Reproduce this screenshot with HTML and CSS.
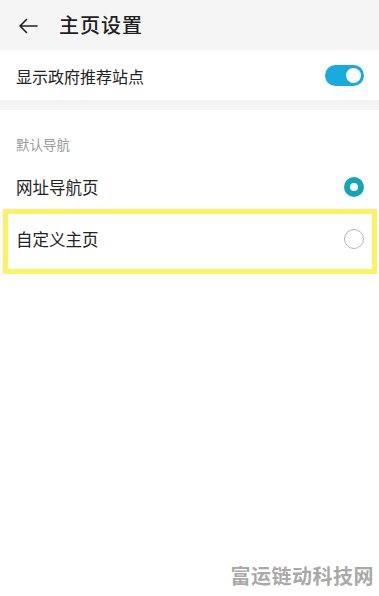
FILE: index.html
```html
<!DOCTYPE html>
<html lang="zh">
<head>
<meta charset="utf-8">
<link rel="stylesheet" href="styles.css">
</head>
<body>
<div class="page">
  <header class="topbar">
    <svg class="back" width="20" height="16" viewBox="0 0 20 16">
      <path d="M19 8H2M8.5 1.5L2 8l6.5 6.5" fill="none" stroke="#222" stroke-width="1.6" stroke-linecap="round" stroke-linejoin="round"/>
    </svg>
    <h1 class="title">主页设置</h1>
  </header>
  <div class="row row-toggle">
    <span class="row-text">显示政府推荐站点</span>
    <span class="toggle"><span class="knob"></span></span>
  </div>
  <div class="band"></div>
  <section class="section">
    <div class="label">默认导航</div>
    <div class="row row-radio">
      <span class="row-text">网址导航页</span>
      <span class="radio radio-on"></span>
    </div>
    <div class="row row-radio highlighted">
      <span class="row-text">自定义主页</span>
      <span class="radio"></span>
    </div>
  </section>
  <div class="watermark">富运链动科技网</div>
</div>
</body>
</html>
```
FILE: styles.css
```css
html, body {
  margin: 0;
  padding: 0;
  background: #ffffff;
}
body {
  font-family: "Noto Sans CJK SC", "Noto Sans", sans-serif;
  color: #222222;
}
.page {
  position: relative;
  width: 379px;
  height: 596px;
  overflow: hidden;
  background: #ffffff;
}
.topbar {
  height: 50px;
  background: #f5f5f5;
  display: flex;
  align-items: center;
  padding-left: 18px;
  box-sizing: border-box;
}
.back {
  display: block;
  margin-right: 21px;
  margin-top: 1px;
}
.title {
  margin: 0;
  font-size: 20px;
  font-weight: 500;
  line-height: 24px;
  color: #1f1f1f;
  letter-spacing: 1px;
}
.row {
  display: flex;
  align-items: center;
  justify-content: space-between;
  padding: 0 15px 0 16px;
  box-sizing: border-box;
}
.row-toggle {
  height: 50px;
  padding-top: 1px;
}
.row-text {
  font-size: 16px;
  line-height: 20px;
  color: #222222;
}
.row-radio .row-text {
  font-size: 16.5px;
}
.toggle {
  position: relative;
  width: 39px;
  height: 21px;
  border-radius: 11px;
  background: #19a9dc;
  display: flex;
  align-items: center;
  justify-content: flex-end;
  padding-right: 3px;
  box-sizing: border-box;
}
.knob {
  width: 15px;
  height: 15px;
  border-radius: 50%;
  background: #ffffff;
}
.band {
  height: 10px;
  background: #f4f4f4;
}
.label {
  padding: 24px 16px 7px;
  font-size: 13.5px;
  line-height: 20px;
  color: #9a9a9a;
}
.row-radio {
  height: 52px;
}
.radio {
  width: 20px;
  height: 20px;
  border-radius: 50%;
  border: 1px solid #b5b5b5;
  box-sizing: border-box;
}
.radio-on {
  border: 6px solid #13a4b6;
}
.highlighted {
  position: relative;
}
.highlighted::after {
  content: "";
  position: absolute;
  left: 3px;
  right: 2px;
  top: -4px;
  bottom: -9px;
  border: 5px solid #fdf164;
  box-sizing: border-box;
  pointer-events: none;
}
.watermark {
  position: absolute;
  right: 5px;
  top: 564px;
  font-size: 20px;
  font-weight: 700;
  line-height: 24px;
  color: #a9a9a9;
  letter-spacing: 0.5px;
}
```
